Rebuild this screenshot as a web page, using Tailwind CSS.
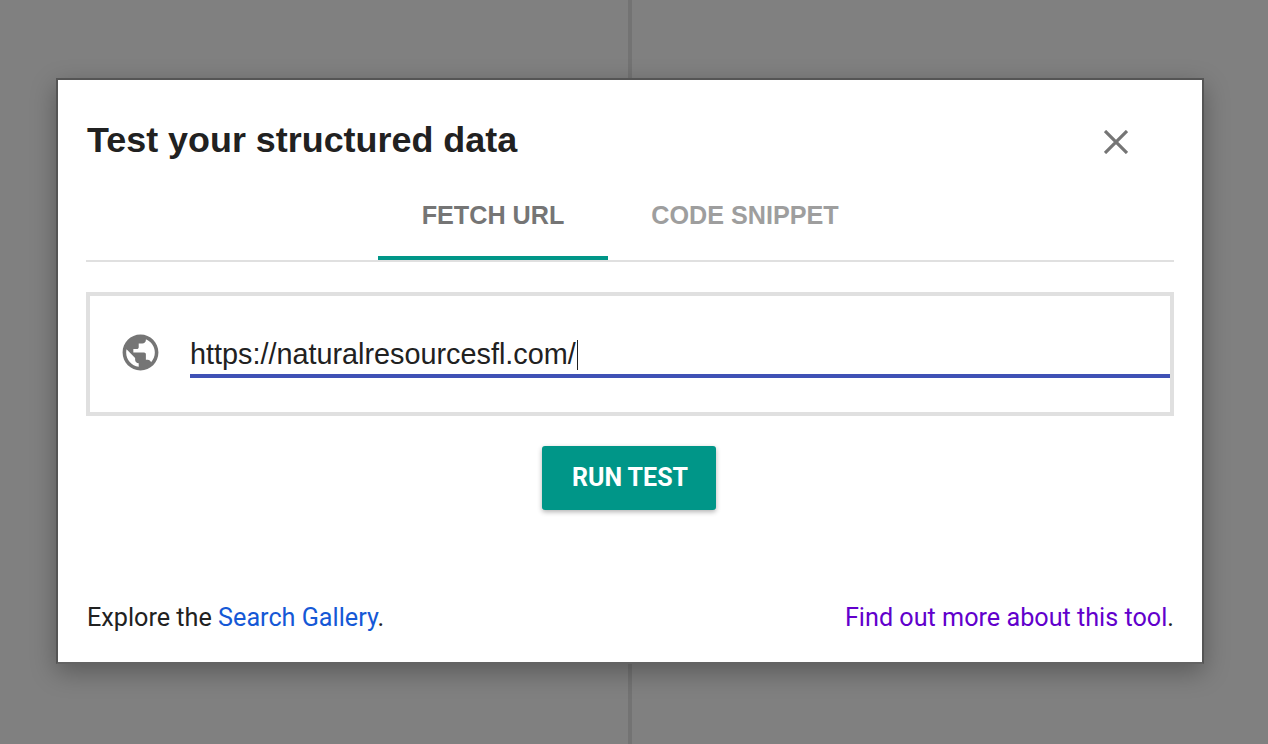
<!DOCTYPE html>
<html>
<head>
<meta charset="utf-8">
<script src="https://cdn.jsdelivr.net/npm/@tailwindcss/browser@4"></script>
</head>
<body class="bg-[#808080]">
<div class="relative h-[744px] w-[1268px] overflow-hidden bg-[#808080] pt-[78px] pl-[56px]">
  <div class="absolute top-0 left-[628px] h-full w-[4px] bg-[#737373]"></div>
  <div class="relative flex h-[586px] w-[1148px] flex-col border-2 border-[#555555] border-b-[#636363] bg-white px-[28px] shadow-[0_8px_24px_rgba(0,0,0,0.3)]">
    <div class="flex h-[120px] items-start justify-between">
      <h1 class="mt-[40px] pl-[1px] font-['Liberation_Sans'] text-[35.9px] leading-[40px] font-bold text-[#212121]">Test your structured data</h1>
      <button class="mt-[50px] mr-[46px] h-[24px] w-[24px]">
        <svg viewBox="0 0 24 24" class="h-[24px] w-[24px]"><path d="M1 1L23 23M23 1L1 23" stroke="#757575" stroke-width="3.2" fill="none"/></svg>
      </button>
    </div>
    <div class="flex h-[62px] justify-center border-b-2 border-[#e0e0e0] font-['Liberation_Sans'] text-[25.2px] font-bold">
      <div class="flex h-[60px] w-[230px] items-start justify-center border-b-4 border-[#009688] leading-[30px] text-[#757575]">FETCH URL</div>
      <div class="flex h-[60px] w-[274px] items-start justify-center leading-[30px] text-[#9e9e9e]">CODE SNIPPET</div>
    </div>
    <div class="mt-[30px] flex h-[124px] items-center border-4 border-[#e0e0e0] pl-[29px]">
      <svg viewBox="0 0 24 24" class="mb-[4px] h-[43px] w-[43px] shrink-0" fill="#757575"><path d="M12 2C6.48 2 2 6.48 2 12s4.48 10 10 10 10-4.48 10-10S17.52 2 12 2zm-1 17.93c-3.95-.49-7-3.85-7-7.93 0-.62.08-1.21.21-1.79L9 15v1c0 1.1.9 2 2 2v1.93zm6.9-2.54c-.26-.81-1-1.39-1.9-1.39h-1v-3c0-.55-.45-1-1-1H8v-2h2c.55 0 1-.45 1-1V7h2c1.1 0 2-.9 2-2v-.41c2.93 1.19 5 4.06 5 7.41 0 2.08-.8 3.97-2.1 5.39z"/></svg>
      <div class="mt-[4px] ml-[28px] flex h-[44px] flex-1 items-end border-b-4 border-[#3f51b5] pb-[1px] font-['Liberation_Sans'] text-[28.8px] leading-[38px] text-[#212121]">https://naturalresourcesfl.com/<span class="mb-[3px] ml-[1px] h-[30px] w-[1px] bg-[#212121]"></span></div>
    </div>
    <div class="mt-[30px] flex justify-center">
      <button class="-ml-[2px] h-[64px] w-[174px] rounded-[3px] bg-[#009688] pl-[2px] font-['Roboto'] text-[25px] font-bold text-white shadow-[0_2px_5px_rgba(0,0,0,0.3)]">RUN TEST</button>
    </div>
    <div class="mt-auto mb-[28px] flex justify-between font-['Roboto'] text-[25.2px] leading-[32px] text-[#212121]">
      <p class="pl-[1px]">Explore the <a class="text-[#1558d6]">Search Gallery</a>.</p>
      <p><a class="text-[#6200cc]">Find out more about this tool</a>.</p>
    </div>
  </div>
</div>
</body>
</html>
